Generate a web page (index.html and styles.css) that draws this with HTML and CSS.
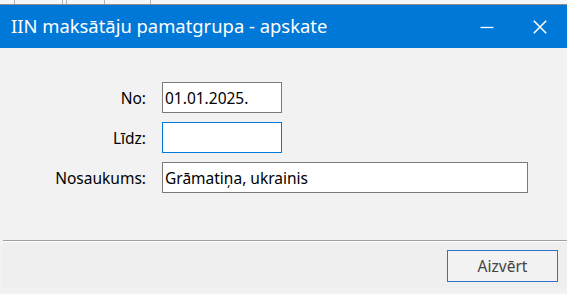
FILE: index.html
```html
<!DOCTYPE html>
<html lang="lv">
<head>
  <meta charset="UTF-8" />
  <meta name="viewport" content="width=device-width, initial-scale=1" />
  <title>IIN maksātāju pamatgrupa - apskate</title>
  <link rel="stylesheet" href="styles.css">
</head>
<body>
  <div class="behind" aria-hidden="true">
    <span class="tick t1"></span>
    <span class="tick t2"></span>
    <span class="tick t3"></span>
    <span class="tick t4"></span>
    <span class="tick t5"></span>
  </div>

  <div class="dialog">
    <div class="title-bar">
      <div class="title">IIN maksātāju pamatgrupa - apskate</div>
      <div class="win-buttons">
        <button class="win-btn" title="Minimizēt">
          <svg width="14" height="14" viewBox="0 0 14 14"><path d="M0.5 7.5h13" stroke="#fff" stroke-width="1.3" fill="none"/></svg>
        </button>
        <button class="win-btn" title="Aizvērt">
          <svg width="14" height="14" viewBox="0 0 14 14"><path d="M0.8 0.8L13.2 13.2M13.2 0.8L0.8 13.2" stroke="#fff" stroke-width="1.6" fill="none"/></svg>
        </button>
      </div>
    </div>

    <div class="content">
      <form class="fields">
        <label for="dateFrom">No:</label>
        <input type="text" id="dateFrom" class="short" value="01.01.2025." />

        <label for="dateTo">Līdz:</label>
        <input type="text" id="dateTo" class="short focused" value="" />

        <label for="groupName">Nosaukums:</label>
        <input type="text" id="groupName" class="long" value="Grāmatiņa, ukrainis" />
      </form>
    </div>

    <div class="separator"></div>

    <div class="footer">
      <button class="close-btn">Aizvērt</button>
    </div>
  </div>
</body>
</html>
```

FILE: styles.css
```css
body {
  margin: 0;
  padding: 0;
  background-color: #f2f2f2;
  font-family: 'Noto Sans', 'Open Sans', sans-serif;
  overflow: hidden;
}

.behind {
  height: 4px;
  border-bottom: 1px solid #8c8c8c;
  background-color: #f7f7f7;
  position: relative;
}

.tick {
  position: absolute;
  top: 0;
  width: 1px;
  height: 4px;
  background-color: #b4b4b4;
}
.t1 { left: 14px; }
.t2 { left: 62px; }
.t3 { left: 66px; }
.t4 { left: 104px; }
.t5 { left: 150px; }

.title-bar {
  height: 43px;
  background-color: #0078d7;
  display: flex;
  align-items: center;
  justify-content: space-between;
}

.title {
  color: #fff;
  font-size: 18.4px;
  padding-left: 11px;
  margin-top: -2px;
}

.win-buttons {
  display: flex;
  align-items: center;
  height: 100%;
}

.win-btn {
  width: 46px;
  height: 100%;
  background: transparent;
  border: none;
  padding: 0;
  display: flex;
  align-items: center;
  justify-content: center;
}

.win-btn + .win-btn {
  width: 40px;
  margin-right: 7px;
  margin-left: 10px;
}

.content {
  height: 192px;
  box-sizing: border-box;
  padding-top: 34px;
}

.fields {
  display: grid;
  grid-template-columns: 146px auto;
  column-gap: 16px;
  row-gap: 9px;
  align-items: center;
  justify-items: start;
  margin: 0;
}

.fields label {
  justify-self: end;
  font-size: 15.5px;
  color: #000;
}

.fields input {
  height: 31px;
  box-sizing: border-box;
  border: 1px solid #7a7a7a;
  background-color: #fff;
  font-family: 'Noto Sans', 'Open Sans', sans-serif;
  font-size: 15.5px;
  color: #000;
  padding: 0 2px;
  margin: 0;
  outline: none;
}

.fields .short {
  width: 120px;
}

.fields .long {
  width: 366px;
}

.fields .focused {
  border-color: #0078d7;
}

.separator {
  margin-left: 3px;
  border-top: 1px solid #a0a0a0;
  border-bottom: 1px solid #fff;
}

.footer {
  margin-left: 3px;
  height: 46px;
  background-color: #efefef;
  display: flex;
  justify-content: flex-end;
  align-items: flex-start;
  padding-top: 8px;
  padding-right: 9px;
  box-sizing: border-box;
}

.close-btn {
  width: 111px;
  height: 32px;
  background-color: #f2f2f2;
  border: 1px solid #2f72c8;
  font-family: 'Noto Sans', 'Open Sans', sans-serif;
  font-size: 15.5px;
  color: #444;
  padding: 0;
}
```
